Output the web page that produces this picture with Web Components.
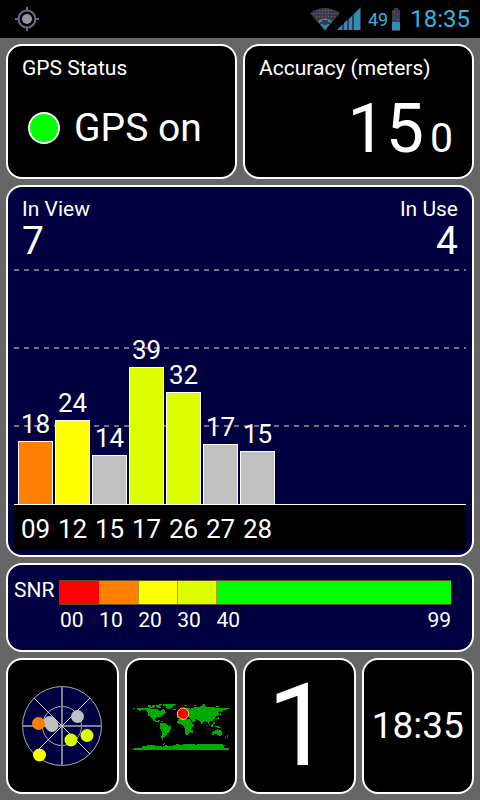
<!DOCTYPE html>
<html lang="en">
<head>
<meta charset="utf-8">
<meta name="viewport" content="width=device-width, initial-scale=1">
<title>GPS Status</title>
<style>
    html, body {
        height: 100%;
        margin: 0;
    }

    body {
        background: #666;
        color: #fff;
        font-family: Roboto, "Noto Sans", sans-serif;
    }
</style>
</head>
<body>
<gps-app></gps-app>

<script>
class StatusBar extends HTMLElement {
    constructor() {
        super();
        this.attachShadow({ mode: 'open' });
        this.render();
    }

    render() {
        this.shadowRoot.innerHTML = `
<style>
    :host {
        display: flex;
        align-items: center;
        height: 38px;
        padding: 0 10px 0 15px;
        box-sizing: border-box;
        background: #000;
        color: #33b5e5;
    }

    svg {
        display: block;
    }

    .tray {
        display: flex;
        align-items: center;
        margin-left: auto;
    }

    .level {
        margin: 0 4px 0 7px;
        font-size: 18px;
    }

    .clock {
        margin-left: 10px;
        font-size: 24px;
    }
</style>
            <svg width="24" height="24" viewBox="0 0 24 24" fill="none" stroke="#6a6a88" stroke-width="2">
                <circle cx="12" cy="12" r="8.5"/>
                <path d="M12 0v4M12 20v4M0 12h4M20 12h4"/>
                <circle cx="12" cy="12" r="5" fill="#9494a0" stroke="none"/>
            </svg>
            <div class="tray">
                <svg width="30" height="24" viewBox="0 0 30 24">
                    <defs>
                        <pattern id="dots" width="3" height="3" patternUnits="userSpaceOnUse">
                            <rect width="3" height="3" fill="#3a3a50"/>
                            <rect width="1" height="1" fill="#a06420"/>
                        </pattern>
                    </defs>
                    <path d="M0 6Q15-4 30 6L15 24Z" fill="#3a3a50"/>
                    <path d="M2 6Q15-2 28 6L23 12Q15 7 7 12Z" fill="url(#dots)"/>
                    <path d="M8 14Q15 9 22 14L15 23Z" fill="#2a90b8"/>
                    <path d="M12 13h6v2h2v2h-3v1h-4v-1h-3v-2h2z" fill="#3a3a50"/>
                </svg>
                <svg width="24" height="24" viewBox="0 0 24 24" style="margin-left:-3px">
                    <path d="M0 23L24 0V23Z" fill="#3a3a50"/>
                    <path d="M1 23V22L5 18V23ZM7 23V16L10 13V23ZM12 23V12L15 9V23ZM17 23V7L23 1V23Z" fill="#2a90b8"/>
                </svg>
                <span class="level">49</span>
                <svg width="8" height="23" viewBox="0 0 8 23">
                    <path d="M2 0h4v2h2v21H0V2h2z" fill="#3a3a50"/>
                    <path d="M0 14h8v8H0z" fill="#2a90b8"/>
                    <path d="M2 4h1v1H2zM5 6h1v1H5zM2 9h1v1H2zM5 11h1v1H5z" fill="#a06420"/>
                </svg>
                <span class="clock">18:35</span>
            </div>
        `;
    }
}

class GpsPanel extends HTMLElement {
    constructor() {
        super();
        this.attachShadow({ mode: 'open' });
        this.shadowRoot.innerHTML = `
<style>
    :host {
        display: flex;
        flex-direction: column;
        min-width: 0;
        box-sizing: border-box;
        border: 2px solid #fff;
        border-radius: 16px;
        background: var(--panel-background, #000);
        font-size: 21px;
        line-height: 26px;
    }

    :host([tone="navy"]) {
        --panel-background: #000040;
    }

    :host([centered]) {
        align-items: center;
        justify-content: center;
    }
</style>
            <slot></slot>
        `;
    }
}

class StatusLight extends HTMLElement {
    constructor() {
        super();
        this.attachShadow({ mode: 'open' });
        this.shadowRoot.innerHTML = `
<style>
    :host {
        display: flex;
        align-items: center;
        gap: 14px;
        font-size: 39px;
        line-height: 46px;
    }

    .light {
        width: 32px;
        height: 32px;
        box-sizing: border-box;
        border: 2px solid #fff;
        border-radius: 50%;
        background: #0f0;
    }
</style>
            <span class="light"></span>
            <slot></slot>
        `;
    }
}

class SignalChart extends HTMLElement {
    constructor() {
        super();
        this.attachShadow({ mode: 'open' });
        this.satellites = [
            { id: '09', snr: 18, color: '#ff8000' },
            { id: '12', snr: 24, color: '#ffff00' },
            { id: '15', snr: 14, color: '#c0c0c0' },
            { id: '17', snr: 39, color: '#dcff00' },
            { id: '26', snr: 32, color: '#dcff00' },
            { id: '27', snr: 17, color: '#c0c0c0' },
            { id: '28', snr: 15, color: '#c0c0c0' }
        ];
        this.render();
    }

    render() {
        const bars = this.satellites.map(sat => `
            <div class="slot">
                <span>${sat.snr}</span>
                <div class="bar" style="--snr: ${sat.snr}; background: ${sat.color}"></div>
            </div>`).join('');
        const ids = this.satellites.map(sat => `<span>${sat.id}</span>`).join('');

        this.shadowRoot.innerHTML = `
<style>
    :host {
        display: flex;
        flex-direction: column;
        flex: 1;
        font-size: 26px;
        text-align: center;
        --dash: linear-gradient(90deg, #707088 5px, transparent 5px);
    }

    .plot, .axis {
        display: grid;
        grid-template-columns: repeat(12, minmax(0, 1fr));
        column-gap: 2px;
        padding: 0 6px 0 4px;
    }

    .plot {
        flex: 1;
        border-bottom: 1px solid #fff;
        background-image: var(--dash), var(--dash), var(--dash);
        background-size: 10px 2px;
        background-repeat: repeat-x;
        background-position: 0 0, 0 33.3%, 0 67%;
    }

    .slot {
        display: flex;
        flex-direction: column;
        justify-content: flex-end;
        line-height: 34px;
    }

    /* full height of the plot is 67 dB */
    .bar {
        flex: 0 0 calc(var(--snr) / 67 * 100%);
        box-sizing: border-box;
        border: 1px solid #fff;
        border-bottom: 0;
    }

    .axis {
        padding-top: 4px;
        background: #000;
        line-height: 40px;
    }
</style>
            <div class="plot">${bars}</div>
            <div class="axis">${ids}</div>
        `;
    }
}

class SnrScale extends HTMLElement {
    constructor() {
        super();
        this.attachShadow({ mode: 'open' });
        this.shadowRoot.innerHTML = `
<style>
    :host {
        display: grid;
        grid-template-columns: 45px 1fr;
        padding: 12px 21px 0 6px;
    }

    .colors, .labels {
        display: grid;
        grid-template-columns: repeat(4, minmax(0, 1fr)) minmax(0, 6fr);
    }

    .colors {
        height: 25px;
        margin-top: 3px;
        box-sizing: border-box;
        border: 1px solid #605020;
        border-right: 0;
    }

    .colors i + i + i {
        border-left: 1px solid #a8a820;
    }

    .labels {
        grid-column: 2;
        padding: 2px 0 0 1px;
    }

    .last {
        display: flex;
        justify-content: space-between;
    }
</style>
            <span><slot></slot></span>
            <div class="colors">
                <i style="background:#f00"></i>
                <i style="background:#ff8000"></i>
                <i style="background:#ff0"></i>
                <i style="background:#dcff00"></i>
                <i style="background:#0f0"></i>
            </div>
            <div class="labels">
                <span>00</span><span>10</span><span>20</span><span>30</span>
                <div class="last"><span>40</span><span>99</span></div>
            </div>
        `;
    }
}

class SkyView extends HTMLElement {
    constructor() {
        super();
        this.attachShadow({ mode: 'open' });
        this.shadowRoot.innerHTML = `
<style>
    :host, svg {
        display: block;
    }
</style>
            <svg width="80" height="80" viewBox="0 0 80 80">
                <g fill="none" stroke="#a8a8b0">
                    <circle cx="40" cy="40" r="39.5" fill="#000040"/>
                    <circle cx="40" cy="40" r="19.5"/>
                    <path d="M40 0V80M0 40H80" stroke="#808090" stroke-width="2"/>
                    <path d="M12 12L68 68M68 12L12 68" stroke="#d0d0d8"/>
                </g>
                <g fill="#c0c0c0">
                    <circle cx="55.5" cy="30.5" r="6.5"/>
                    <circle cx="27.5" cy="36.5" r="6.5"/>
                    <circle cx="30" cy="39.5" r="6.5"/>
                </g>
                <circle cx="16.5" cy="37.5" r="6.5" fill="#ff8000"/>
                <circle cx="49" cy="54" r="6.5" fill="#dcff00"/>
                <circle cx="65" cy="49.5" r="6.5" fill="#dcff00"/>
                <circle cx="17.5" cy="69" r="6.5" fill="#ff0"/>
            </svg>
        `;
    }
}

class WorldMap extends HTMLElement {
    constructor() {
        super();
        this.attachShadow({ mode: 'open' });
        this.shadowRoot.innerHTML = `
<style>
    :host, svg {
        display: block;
    }
</style>
            <svg width="96" height="47" viewBox="30 37 288 141">
                <g fill="#00aa00" shape-rendering="crispEdges">
                    <!-- North America -->
                    <path d="M30 51H36V54H30ZM42 54L48 51L72 51L84 54L105 54L108 60L114 60L117 54L123 57L129 66L120 72L114 75L111 81L106 79L99 79L96 84L99 90L106 91L108 95L100 94L91 90L84 80L75 75L75 65L66 58L54 59L42 64L48 59L42 57Z"/>
                    <path d="M75 44H84V48H75ZM87 42H96V48H87ZM99 42L117 41L111 47L117 52L105 52L99 48ZM78 49H93V51H78ZM120 42L129 39H156L159 42L153 45L150 50L141 52L138 56L132 54L129 47L120 45Z"/>
                    <path d="M105 87H111V90H105ZM114 90H120V93H114ZM150 54H159V57H150Z"/>
                    <!-- South America -->
                    <path d="M111 99L120 96L129 99L135 105L146 108L144 116L138 125L132 129L129 135L123 140L120 146L123 149L117 148L115 138L118 123L111 114Z"/>
                    <path d="M123 156H126V160L120 163V159H123Z"/>
                    <!-- Europe and Asia -->
                    <path d="M165 84L162 78L168 76L166 71L174 66L180 63L180 56L186 51L195 51L201 54L213 51L219 48L228 51L234 45L243 43L252 49L270 48L276 51L318 51V56L306 57L300 60L294 66L291 61L282 64L288 69L285 77L278 77L276 83L268 87L270 93L261 90L258 99L264 105L258 103L253 94L246 90L240 95L237 101L231 91L225 87L216 86L219 91L210 96L207 90L201 84L198 78L189 78L183 81L177 77L171 80Z"/>
                    <path d="M168 60H173V67H165V64H168ZM183 43H192V46H183ZM213 44H219V47H213ZM240 40H246V43H240ZM279 46H288V49H279Z"/>
                    <path d="M291 68H294V75H291ZM285 79H288V84L279 87V83H285Z"/>
                    <path d="M270 93H276V99H270ZM249 103H252V106H249ZM255 106L261 109H258ZM264 101H270V108H264ZM258 111H270V113H258ZM276 105L291 108L297 113H288L276 109Z"/>
                    <!-- Africa -->
                    <path d="M165 86L177 82L186 86L201 86L208 99L215 99L211 107L204 114L204 121L198 129L192 133L187 129L186 114L180 102L168 101L162 94Z"/>
                    <path d="M208 117H211V122L208 127H205V120Z"/>
                    <!-- Australia -->
                    <path d="M267 124L276 120L282 116H286L288 119L291 115L297 124V130L291 136L285 132L276 130L267 133ZM288 138H292V140H288ZM312 134H315V137L306 142V139L312 138Z"/>
                    <!-- Antarctica -->
                    <path d="M30 177V174L42 172L57 171V165L90 164L111 166L120 168L126 164L135 165L150 165L159 161L177 162L189 160L210 160L219 162L234 159L258 159L273 160L297 161L306 164L303 171L318 173V177Z"/>
                </g>
                <circle cx="180" cy="69" r="17" fill="#f00" stroke="#ffe040" stroke-width="3"/>
            </svg>
        `;
    }
}

class GpsApp extends HTMLElement {
    constructor() {
        super();
        this.attachShadow({ mode: 'open' });
        this.render();
    }

    render() {
        this.shadowRoot.innerHTML = `
<style>
    :host {
        display: flex;
        flex-direction: column;
        min-height: 100%;
    }

    main {
        flex: 1;
        display: grid;
        grid-template-columns: repeat(4, minmax(0, 1fr));
        grid-template-rows: 135px minmax(340px, 1fr) 89px 136px;
        gap: 6px;
        padding: 6px;
    }

    .half {
        grid-column: span 2;
    }

    .full {
        grid-column: 1 / -1;
    }

    .title {
        padding: 9px 14px 0;
    }

    status-light {
        padding: 24px 20px 0;
    }

    .accuracy {
        display: flex;
        justify-content: flex-end;
        align-items: baseline;
        gap: 6px;
        padding: 13px 19px 0;
        font-size: 68px;
        line-height: 70px;
    }

    .accuracy small {
        font-size: 41px;
    }

    .counts {
        display: flex;
        justify-content: space-between;
        padding: 9px 14px 8px;
    }

    .counts div:last-child {
        text-align: right;
    }

    .counts strong {
        display: block;
        font-weight: 400;
        font-size: 39px;
        line-height: 39px;
    }

    signal-chart {
        margin: 0 6px 6px;
    }

    .fix {
        font-size: 115px;
        line-height: 132px;
    }

    .time {
        font-size: 37px;
    }
</style>
            <status-bar></status-bar>
            <main>
                <gps-panel class="half">
                    <span class="title">GPS Status</span>
                    <status-light>GPS on</status-light>
                </gps-panel>
                <gps-panel class="half">
                    <span class="title">Accuracy (meters)</span>
                    <div class="accuracy"><span>15</span><small>0</small></div>
                </gps-panel>
                <gps-panel class="full" tone="navy">
                    <div class="counts">
                        <div>In View<strong>7</strong></div>
                        <div>In Use<strong>4</strong></div>
                    </div>
                    <signal-chart></signal-chart>
                </gps-panel>
                <gps-panel class="full" tone="navy">
                    <snr-scale>SNR</snr-scale>
                </gps-panel>
                <gps-panel centered><sky-view></sky-view></gps-panel>
                <gps-panel centered><world-map></world-map></gps-panel>
                <gps-panel centered><span class="fix">1</span></gps-panel>
                <gps-panel centered><span class="time">18:35</span></gps-panel>
            </main>
        `;
    }
}

customElements.define('status-bar', StatusBar);
customElements.define('gps-panel', GpsPanel);
customElements.define('status-light', StatusLight);
customElements.define('signal-chart', SignalChart);
customElements.define('snr-scale', SnrScale);
customElements.define('sky-view', SkyView);
customElements.define('world-map', WorldMap);
customElements.define('gps-app', GpsApp);
</script>
</body>
</html>
